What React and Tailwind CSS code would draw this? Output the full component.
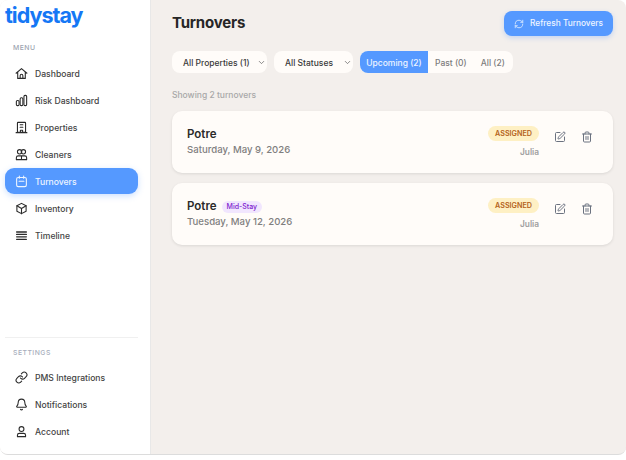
import React from "react";
import { SquarePen, Trash2, RefreshCw, ChevronDown, Link, Bell } from "lucide-react";

const F = { fontFamily: "Inter, sans-serif" };

function Ico({ children, ...p }) {
  return (
    <svg viewBox="0 0 24 24" fill="none" stroke="currentColor" strokeWidth="2" strokeLinecap="round" strokeLinejoin="round" {...p}>
      {children}
    </svg>
  );
}
const HomeI = (p) => (
  <Ico {...p}>
    <path d="M2 11.500 12 3l10 8.500M5 9v12h14V9" />
    <path d="M9.500 21v-5a2.500 2.500 0 0 1 5 0v5" />
  </Ico>
);
const Bars = (p) => (
  <Ico {...p}>
    <rect x="2.500" y="12" width="5" height="9.500" rx="2" />
    <rect x="9.500" y="7" width="5" height="14.500" rx="2" />
    <rect x="16.500" y="2.500" width="5" height="19" rx="2" />
  </Ico>
);
const Building = (p) => (
  <Ico {...p}>
    <rect x="4.500" y="2.500" width="15" height="18.500" rx="1" />
    <path d="M2 21.500h20M10 21v-4h4v4M9.500 7h5M9.500 11.500h5" />
  </Ico>
);
const People = (p) => (
  <Ico {...p}>
    <circle cx="8.500" cy="7" r="4" />
    <circle cx="15.500" cy="7" r="4" />
    <path d="M2.500 21.500V18a3.500 3.500 0 0 1 3.500-3.500h12a3.500 3.500 0 0 1 3.500 3.500v3.500zM12 14.500v7" />
  </Ico>
);
const Cal = (p) => (
  <Ico {...p}>
    <rect x="3" y="4.500" width="18" height="17" rx="3" />
    <path d="M8 2v4M16 2v4M7.500 11.500h9" />
  </Ico>
);
const Cube = (p) => (
  <Ico {...p}>
    <path d="M12 2.500 20.500 7v10L12 21.500 3.500 17V7z" />
    <path d="M3.500 7 12 12l8.500-5M12 12v9.500" />
  </Ico>
);
const Lines = (p) => (
  <Ico {...p} strokeWidth="2.400">
    <path d="M3 5.500h18M3 10h18M3 14.500h18M3 19h18" />
  </Ico>
);
const User = (p) => (
  <Ico {...p}>
    <circle cx="12" cy="7.500" r="4.500" />
    <path d="M4.500 21.500V19a3.500 3.500 0 0 1 3.500-3.500h8a3.500 3.500 0 0 1 3.500 3.500v2.500z" />
  </Ico>
);

const menu = [
  ["Dashboard", HomeI],
  ["Risk Dashboard", Bars],
  ["Properties", Building],
  ["Cleaners", People],
  ["Turnovers", Cal, true],
  ["Inventory", Cube],
  ["Timeline", Lines],
];
const settings = [
  ["PMS Integrations", Link],
  ["Notifications", Bell],
  ["Account", User],
];

function NavItem({ label, Icon, active }) {
  return (
    <div className={"flex items-center h-[26px] pt-[1px] rounded-[9px] pl-[9.500px] gap-[7.500px] text-[8.600px] font-medium " + (active ? "bg-[#5599ff] text-[#eef5ff] shadow-[0_2px_6px_rgba(85,153,255,0.3)]" : "text-[#444]")}>
      <Icon size={13} strokeWidth={2} className={"w-[13px] h-[13px] shrink-0 " + (active ? "text-[#eef5ff]" : "text-[#2b2b2b]")} />
      <span className="pt-[2px]">{label}</span>
    </div>
  );
}

function Card({ date, mid }) {
  return (
    <div className="flex justify-between h-[62px] rounded-[10px] bg-[#fffcf9] shadow-[0_1px_3px_rgba(0,0,0,0.1)] pl-[15px] pr-[20px]">
      <div className="flex flex-col pt-[16px]">
        <div className="flex items-center gap-[5px] h-[16px]">
          <span className="text-[11.500px] font-semibold text-[#2a2a2a]">Potre</span>
          {mid && <span className="h-[12px] px-[5px] flex items-center rounded-full bg-[#f1e6fe] text-[#7e22ce] text-[7px] font-medium">Mid-Stay</span>}
        </div>
        <span className="text-[9.600px] font-medium text-[#7f7f7f] leading-[14px]">{date}</span>
      </div>
      <div className="flex pt-[15px] gap-[15px]">
        <div className="flex flex-col items-end">
          <span className="h-[15px] pt-[1px] px-[7px] flex items-center rounded-full bg-[#fef0c4] text-[#b4621a] text-[7.200px] font-semibold">ASSIGNED</span>
          <span className="text-[8.300px] font-semibold text-[#a0a0a0] mt-[5px] leading-[12px]">Julia</span>
        </div>
        <div className="flex gap-[15px] pt-[5px] text-[#6b7280]">
          <SquarePen size={12} strokeWidth={2} />
          <Trash2 size={12} strokeWidth={2} />
        </div>
      </div>
    </div>
  );
}

export default function App() {
  return (
    <div style={F} className="w-[626px] h-[460px] bg-white overflow-hidden">
      <div className="flex h-[455px] bg-[#f3efec] rounded-[8px] border-b border-[#dcdcdc] overflow-hidden">
        <aside className="w-[151px] shrink-0 bg-white border-r border-[#e8e8e8] flex flex-col pl-[5px] pr-[12px]">
          <div className="h-[43px] pt-[1px] text-[21.500px] leading-[29px] font-bold tracking-[-1px] text-[#1577f5]">tidystay</div>
          <div className="text-[6.800px] font-medium text-[#9ca3af] tracking-[0.5px] pl-[8px] h-[17px] leading-[10px]">MENU</div>
          <nav className="flex flex-col gap-[1px]">
            {menu.map(([l, I, a]) => <NavItem key={l} label={l} Icon={I} active={a} />)}
          </nav>
          <div className="mt-auto border-t border-[#f0f0f0] pt-[11px] pb-[10px]">
            <div className="text-[6.800px] font-medium text-[#a6adbb] tracking-[0.5px] pl-[8px] h-[15px] leading-[8px]">SETTINGS</div>
            <nav className="flex flex-col gap-[1px]">
              {settings.map(([l, I]) => <NavItem key={l} label={l} Icon={I} />)}
            </nav>
          </div>
        </aside>
        <main className="flex-1 pr-[13px] pl-[21px] pt-[11px]">
          <div className="flex justify-between items-center h-[25px]">
            <h1 className="text-[15px] font-bold text-[#262626] tracking-[-0.2px]">Turnovers</h1>
            <button className="flex items-center gap-[6px] h-[25px] w-[109px] justify-center rounded-[8px] bg-[#5599ff] text-[#eef5ff] text-[8.300px] font-medium shadow-[0_2px_5px_rgba(85,153,255,0.3)]">
              <RefreshCw size={10} strokeWidth={1.8} />
              Refresh Turnovers
            </button>
          </div>
          <div className="flex gap-[7px] mt-[15px] h-[22px] text-[8.500px] font-medium">
            <div className="w-[95px] flex items-center justify-between pl-[11px] pr-[1px] rounded-[8px] bg-[#fffcf9] text-[#3a3a3a]">
              <span className="pt-[2px]">All Properties (1)</span><ChevronDown size={9} className="text-[#666]" />
            </div>
            <div className="w-[79px] flex items-center justify-between pl-[11px] pr-[1px] rounded-[8px] bg-[#fffcf9] text-[#3a3a3a]">
              <span className="pt-[2px]">All Statuses</span><ChevronDown size={9} className="text-[#666]" />
            </div>
            <div className="w-[153px] flex items-center rounded-[8px] bg-[#fffcf9] overflow-hidden text-[#7d7d7d]">
              <span className="w-[68px] h-full pt-[2px] flex items-center justify-center bg-[#5599ff] text-[#eef5ff]">Upcoming (2)</span>
              <span className="ml-[7px] pt-[2px]">Past (0)</span>
              <span className="ml-[14px] pt-[2px]">All (2)</span>
            </div>
          </div>
          <div className="mt-[16px] text-[8.500px] font-medium text-[#a8a8a8] h-[12px] leading-[12px]">Showing 2 turnovers</div>
          <div className="flex flex-col gap-[10px] mt-[10px]">
            <Card date="Saturday, May 9, 2026" />
            <Card date="Tuesday, May 12, 2026" mid />
          </div>
        </main>
      </div>
    </div>
  );
}
